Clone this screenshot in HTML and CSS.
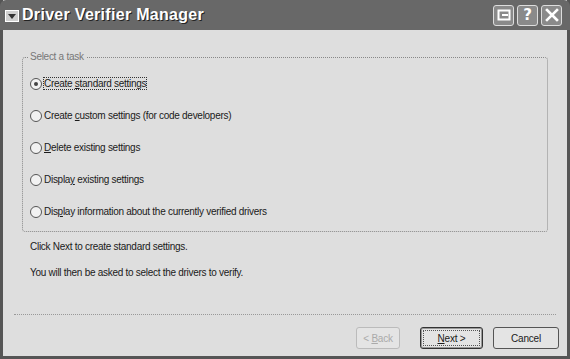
FILE: index.html
```html
<!DOCTYPE html>
<html>
<head>
<meta charset="utf-8">
<link rel="stylesheet" href="styles.css">
</head>
<body>
<div class="window">
  <div class="titlebar">
    <svg class="app-icon" width="14" height="12" viewBox="0 0 14 12">
      <rect x="0.5" y="0.5" width="13" height="11" fill="#d0d0d0" stroke="#fff"/>
      <path d="M3 4 L11 4 L7 9 Z" fill="#333"/>
    </svg>
    <span class="title">Driver Verifier Manager</span>
    <div class="caption-buttons">
      <div class="cbtn">
        <svg width="14" height="12" viewBox="0 0 14 12"><rect x="1.5" y="1.5" width="11" height="9" fill="none" stroke="#fff" stroke-width="2"/><rect x="5" y="5" width="6" height="2" fill="#fff"/></svg>
      </div>
      <div class="cbtn"><span class="q">?</span></div>
      <div class="cbtn">
        <svg width="14" height="14" viewBox="0 0 14 14"><path d="M2 2 L12 12 M12 2 L2 12" stroke="#fff" stroke-width="2.6" stroke-linecap="square"/></svg>
      </div>
    </div>
  </div>
  <div class="content">
    <div class="group">
      <div class="legend">Select a task</div>
      <div class="options">
        <label class="opt"><span class="radio checked"></span><span class="focus">Create <u>s</u>tandard settings</span></label>
        <label class="opt"><span class="radio"></span><span>Create <u>c</u>ustom settings (for code developers)</span></label>
        <label class="opt"><span class="radio"></span><span><u>D</u>elete existing settings</span></label>
        <label class="opt"><span class="radio"></span><span>Displa<u>y</u> existing settings</span></label>
        <label class="opt"><span class="radio"></span><span>Dis<u>p</u>lay information about the currently verified drivers</span></label>
      </div>
    </div>
    <p class="info first">Click Next to create standard settings.</p>
    <p class="info">You will then be asked to select the drivers to verify.</p>
  </div>
  <div class="separator"></div>
  <div class="footer">
    <button class="btn disabled">&lt; <u>B</u>ack</button>
    <button class="btn default"><span class="btn-focus"><u>N</u>ext &gt;</span></button>
    <button class="btn cancel">Cancel</button>
  </div>
</div>
</body>
</html>
```

FILE: styles.css
```css
* { box-sizing: border-box; }
html, body { margin: 0; padding: 0; }
body {
  width: 570px;
  height: 359px;
  background: #dcdcdc;
  font-family: "Liberation Sans", Arial, sans-serif;
  font-size: 10px;
  letter-spacing: -0.28px;
  color: #1a1a1a;
  overflow: hidden;
}
.window {
  width: 570px;
  height: 359px;
  background: #dedede;
  border-left: 3px solid #555;
  border-right: 3px solid #555;
  border-bottom: 3px solid #555;
  display: flex;
  flex-direction: column;
}
.titlebar {
  height: 30px;
  flex: none;
  margin: 0 -3px;
  background: #686868;
  display: flex;
  align-items: center;
  padding: 0 8px 0 5px;
  border-radius: 6px 6px 0 0;
}
.app-icon { flex: none; margin-right: 3px; margin-top: 1px; }
.title {
  color: #fff;
  font-family: "Liberation Sans", sans-serif;
  font-weight: bold;
  font-size: 16px;
  letter-spacing: 0.3px;
  text-shadow: 1px 1px 0 #222;
  flex: 1;
}
.caption-buttons { display: flex; gap: 3px; }
.cbtn {
  width: 21px;
  height: 21px;
  border: 1px solid #ddd;
  border-radius: 3px;
  background: #8a8a8a;
  display: flex;
  align-items: center;
  justify-content: center;
}
.q { color: #fff; font-family: "DejaVu Sans", sans-serif; font-weight: bold; font-size: 15px; line-height: 1; letter-spacing: 0; }
.content { padding: 27px 19px 0 19px; flex: 1; }
.group {
  border: 1px dotted #888;
  border-radius: 3px;
  height: 175px;
  position: relative;
  padding: 19px 7px 0 7px;
}
.legend {
  position: absolute;
  top: -7px;
  left: 5px;
  padding: 0 2px;
  background: #dedede;
  color: #777;
}
.options { display: flex; flex-direction: column; gap: 19px; }
.opt { display: flex; align-items: center; height: 13px; }
.radio {
  width: 12px; height: 12px;
  border: 1px solid #555;
  border-radius: 50%;
  background: #f2f2f2;
  margin-right: 2px;
  flex: none;
  position: relative;
}
.radio.checked::after {
  content: "";
  position: absolute;
  left: 3px; top: 3px;
  width: 4px; height: 4px;
  border-radius: 50%;
  background: #444;
}
.focus { outline: 1px dotted #333; outline-offset: 0; }
.info { margin: 0 0 0 8px; line-height: 13px; }
.info.first { margin-top: 8px; margin-bottom: 13px; }
.separator {
  margin: 0 11px;
  border-top: 1px dotted #999;
  height: 1px;
  flex: none;
}
.footer {
  display: flex;
  justify-content: flex-end;
  gap: 10px;
  padding: 12px 8px 0 0;
  height: 41px;
  flex: none;
}
.btn {
  font-family: "Liberation Sans", Arial, sans-serif;
  font-size: 10px;
  letter-spacing: -0.2px;
  height: 22px;
  background: #e4e4e4;
  border: 1px solid #555;
  border-radius: 3px;
  color: #1a1a1a;
  padding: 0;
}
.btn.disabled { width: 44px; color: #aaa; border-color: #bbb; margin-right: 10px; }
.btn.default {
  width: 63px;
  border: 1px solid #333;
  box-shadow: inset 0 0 0 1px #999;
  display: flex;
  align-items: center;
  justify-content: center;
}
.btn-focus {
  display: flex;
  align-items: center;
  justify-content: center;
  width: 55px;
  height: 14px;
  outline: 1px dotted #555;
}
.btn.cancel { width: 66px; }
```
